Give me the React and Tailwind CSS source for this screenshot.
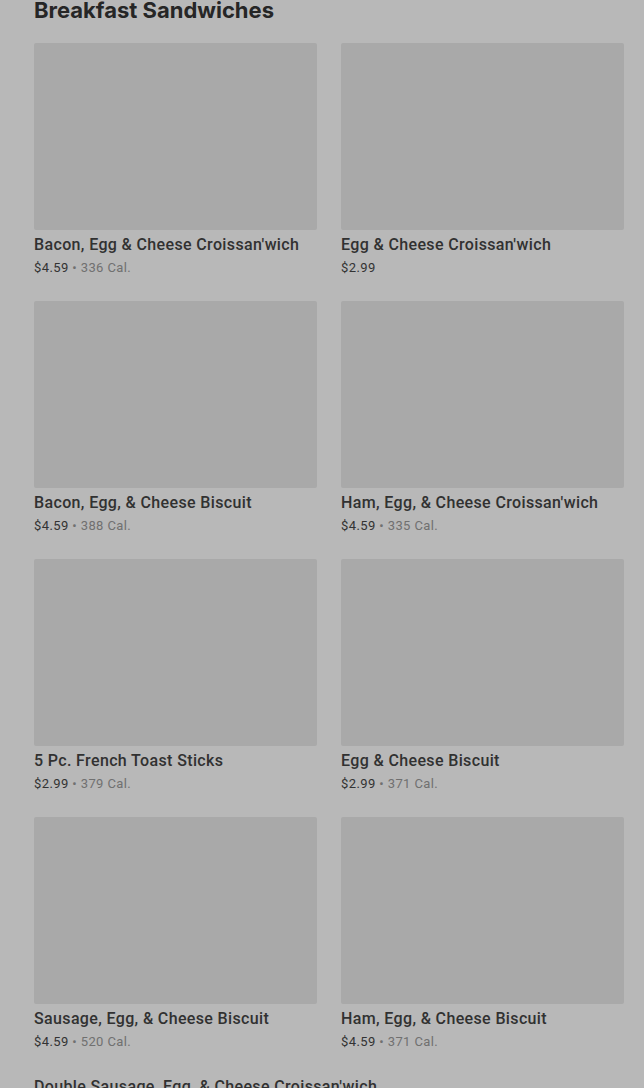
import React from 'react';

const items = [
  { name: "Bacon, Egg & Cheese Croissan'wich", price: '$4.59', cal: '336 Cal.' },
  { name: "Egg & Cheese Croissan'wich", price: '$2.99' },
  { name: 'Bacon, Egg, & Cheese Biscuit', price: '$4.59', cal: '388 Cal.' },
  { name: "Ham, Egg, & Cheese Croissan'wich", price: '$4.59', cal: '335 Cal.' },
  { name: '5 Pc. French Toast Sticks', price: '$2.99', cal: '379 Cal.' },
  { name: 'Egg & Cheese Biscuit', price: '$2.99', cal: '371 Cal.' },
  { name: 'Sausage, Egg, & Cheese Biscuit', price: '$4.59', cal: '520 Cal.' },
  { name: 'Ham, Egg, & Cheese Biscuit', price: '$4.59', cal: '371 Cal.' },
];

const MenuCard = ({ item }) => (
  <div className="h-[234px]">
    <div className="h-[187px] bg-[#a9a9a9] rounded-[2px]" />
    <p className="mt-[5px] text-[16px] leading-[20px] font-medium tracking-[0.36px] text-[#313131] whitespace-nowrap">{item.name}</p>
    <p className="mt-1 text-[13px] leading-[18px] tracking-[0.4px] text-[#333333]">
      {item.price}
      {item.cal && (
        <span className="text-[#707070]"> • {item.cal}</span>
      )}
    </p>
  </div>
);

const App = () => {
  return (
    <div className="h-[1088px] overflow-hidden bg-[#b8b8b8] pl-[34px] pr-[20px] font-['Roboto','Liberation_Sans',sans-serif]">
      <h2 className="-mt-[6px] text-[22px] leading-[32px] font-bold text-[#262626] font-['Inter','Liberation_Sans',sans-serif]">
        Breakfast Sandwiches
      </h2>
      <div className="mt-[17px] grid grid-cols-2 gap-x-[24px] gap-y-[24px]">
        {items.map((item) => (
          <MenuCard key={item.name} item={item} />
        ))}
        <div className="col-span-2">
          <p className="mt-[2px] text-[16px] leading-[20px] font-medium tracking-[0.36px] text-[#313131] whitespace-nowrap">
            Double Sausage, Egg, &amp; Cheese Croissan'wich
          </p>
        </div>
      </div>
    </div>
  );
};

export default App;
